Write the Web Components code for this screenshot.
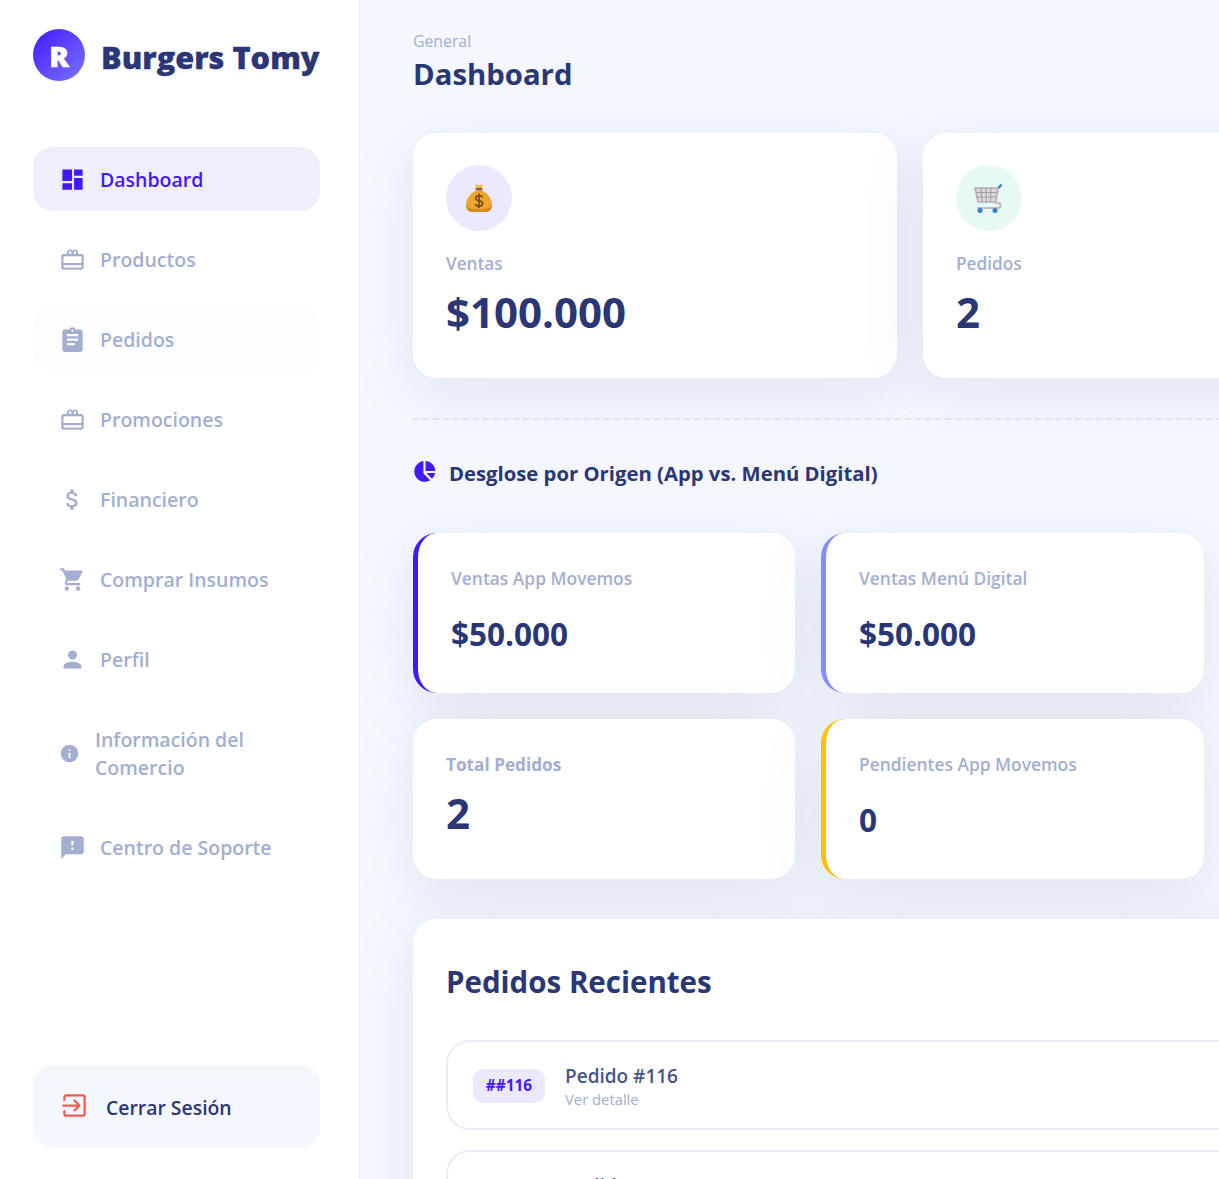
<!DOCTYPE html>
<html lang="es">
<head>
<meta charset="utf-8">
<title>Burgers Tomy</title>
<style>
  html, body { margin: 0; height: 100%; overflow: hidden; }
  body { font-family: 'Open Sans', 'Noto Sans', sans-serif; background: #f4f7fe; }
</style>
</head>
<body>
<app-shell>
  <side-nav slot="nav" brand="Burgers Tomy">
    <nav-item active icon="dashboard">Dashboard</nav-item>
    <nav-item icon="gift">Productos</nav-item>
    <nav-item hover icon="clipboard">Pedidos</nav-item>
    <nav-item icon="gift">Promociones</nav-item>
    <nav-item icon="dollar">Financiero</nav-item>
    <nav-item icon="cart">Comprar Insumos</nav-item>
    <nav-item icon="person">Perfil</nav-item>
    <nav-item narrow icon="info">Información del Comercio</nav-item>
    <nav-item icon="feedback">Centro de Soporte</nav-item>
  </side-nav>

  <page-head eyebrow="General" title="Dashboard"></page-head>

  <div style="display:flex;gap:26px">
    <stat-card label="Ventas" value="$100.000" tint="#ece8fd" icon="bag"></stat-card>
    <stat-card label="Pedidos" value="2" tint="#e6f9f4" icon="trolley"></stat-card>
  </div>

  <section-title>Desglose por Origen (App vs. Menú Digital)</section-title>

  <div style="display:grid;grid-template-columns:382px 383px;gap:26px;width:791px">
    <mini-card label="Ventas App Movemos" value="$50.000" accent="#4318ff"></mini-card>
    <mini-card label="Ventas Menú Digital" value="$50.000" accent="#868cff"></mini-card>
    <mini-card label="Total Pedidos" value="2" big></mini-card>
    <mini-card label="Pendientes App Movemos" value="0" accent="#ffc107"></mini-card>
  </div>

  <recent-panel heading="Pedidos Recientes">
    <order-row code="##116" name="Pedido #116" note="Ver detalle"></order-row>
    <order-row code="##115" name="Pedido #115" note="Ver detalle"></order-row>
  </recent-panel>
</app-shell>

<script>
// icon set, all on a 24 box
const ICONS = {
  dashboard: '<path d="M3 3h8.600v10.400H3zM3 15.400h8.600V21H3zM13.400 3H21v5.600h-7.600zM13.400 10.600H21V21h-7.600z"/>',
  gift: '<path fill-rule="evenodd" d="M4 7h3.300a3 3 0 0 1-.3-1.200C7 4.200 8.200 3 9.700 3c1 0 1.800.5 2.300 1.300C12.500 3.500 13.300 3 14.300 3 15.800 3 17 4.200 17 5.800c0 .4-.1.8-.3 1.200H20c1.200 0 2 .9 2 2v10c0 1.100-.8 2-2 2H4c-1.200 0-2-.9-2-2V9c0-1.100.8-2 2-2zm5.700-2.300c-.6 0-1 .5-1 1.100S9.100 7 9.700 7h1.300V5.800c0-.6-.6-1.100-1.300-1.100zm4.600 0c-.7 0-1.300.5-1.300 1.100V7h1.300c.6 0 1-.6 1-1.200s-.4-1.100-1-1.100zM4 9v6.200h16V9zm0 8.200V19h16v-1.800z"/>',
  clipboard: '<path fill-rule="evenodd" d="M19 3h-4.200C14.400 1.800 13.300 1 12 1s-2.400.8-2.800 2H5c-1.100 0-2 .9-2 2v16c0 1.100.9 2 2 2h14c1.100 0 2-.9 2-2V5c0-1.100-.9-2-2-2zm-7 0c.6 0 1 .4 1 1s-.4 1-1 1-1-.4-1-1 .4-1 1-1zM7 7h10v2H7zm0 4h10v2H7zm0 4h7v2H7z"/>',
  dollar: '<path d="M11.800 10.900c-2.300-.6-3-1.200-3-2.100 0-1.100 1-1.900 2.700-1.900 1.800 0 2.400.8 2.500 2.100h2.200c-.1-1.700-1.100-3.200-3.200-3.700V3h-3v2.200C8.100 5.600 6.500 6.900 6.500 8.800c0 2.300 1.900 3.400 4.700 4.100 2.500.6 3 1.500 3 2.400 0 .7-.5 1.800-2.700 1.800-2.100 0-2.900-.9-3-2.100H6.300c.1 2.200 1.800 3.500 3.700 3.900V21h3v-2.200c1.900-.4 3.500-1.500 3.500-3.500 0-2.800-2.400-3.800-4.700-4.400z"/>',
  cart: '<path d="M7 18c-1.100 0-2 .9-2 2s.9 2 2 2 2-.9 2-2-.9-2-2-2zM1 2v2h2l3.600 7.600-1.400 2.400c-.7 1.300.3 3 1.800 3h12v-2H7.400c-.1 0-.2-.1-.2-.2v-.1l.9-1.700h7.400c.8 0 1.400-.4 1.800-1l3.600-6.500c.3-.7-.2-1.500-.9-1.500H5.200l-.9-2zm16 16c-1.100 0-2 .9-2 2s.9 2 2 2 2-.9 2-2-.9-2-2-2z"/>',
  person: '<path d="M12 12c2.200 0 4-1.800 4-4s-1.800-4-4-4-4 1.800-4 4 1.800 4 4 4zm0 2c-2.700 0-8 1.300-8 4v2h16v-2c0-2.700-5.300-4-8-4z"/>',
  info: '<path fill-rule="evenodd" d="M12 2a10 10 0 1 0 0 20 10 10 0 0 0 0-20zm1 15h-2v-6h2zm0-8h-2V7h2z"/>',
  feedback: '<path fill-rule="evenodd" d="M20 2H4c-1.100 0-2 .9-2 2v18l4-4h14c1.100 0 2-.9 2-2V4c0-1.100-.9-2-2-2zm-7 12h-2v-2h2zm0-4h-2V6h2z"/>',
  logout: '<path fill="none" stroke="currentColor" stroke-width="2" stroke-linecap="round" stroke-linejoin="round" d="M3 7V4.500A1.500 1.500 0 0 1 4.500 3h15A1.500 1.500 0 0 1 21 4.500v15a1.500 1.500 0 0 1-1.500 1.500h-15A1.500 1.500 0 0 1 3 19.500V17M2 12h14M12 7.500l4.500 4.500-4.500 4.500"/>',
  pie: '<path d="M11 2A10 10 0 1 0 17.500 20.400L11 14zM13 2v9.500h9.500A10 10 0 0 0 13 2zM13.800 13.500h8.500A10 10 0 0 1 19.200 19z"/>'
};

function iconSvg(name) {
  return `<svg viewBox="0 0 24 24" fill="currentColor" aria-hidden="true">${ICONS[name] || ''}</svg>`;
}

const CARD_SHADOW = '0 16px 60px rgba(112, 144, 176, 0.16)';

const shellTemplate = document.createElement('template');
shellTemplate.innerHTML = `
  <style>
    :host {
      display: flex;
      width: 1219px;
      height: 1179px;
      overflow: hidden;
      background: #f4f7fe;
    }
    main {
      flex: 1;
      min-width: 0;
      padding: 30px 0 0 53px;
      display: flex;
      flex-direction: column;
      align-items: flex-start;
    }
    ::slotted(*) { flex: none; }
    slot[name="nav"]::slotted(*) { position: relative; z-index: 1; }
  </style>
  <slot name="nav"></slot>
  <main><slot></slot></main>
`;

class AppShell extends HTMLElement {
  constructor() {
    super();
    this.attachShadow({ mode: 'open' });
    this.shadowRoot.appendChild(shellTemplate.content.cloneNode(true));
  }
}

const navTemplate = document.createElement('template');
navTemplate.innerHTML = `
  <style>
    :host {
      display: flex;
      flex-direction: column;
      flex: none;
      box-sizing: border-box;
      width: 360px;
      height: 1179px;
      padding: 29px 39px 31px 33px;
      background: #fff;
      border-right: 1px solid #e7ebf6;
    }
    .brand {
      display: flex;
      align-items: center;
      gap: 16px;
      height: 52px;
      margin-bottom: 66px;
    }
    .logo {
      width: 52px;
      height: 52px;
      border-radius: 50%;
      background: linear-gradient(135deg, #4318ff, #7a74ff);
      color: #fff;
      font: 800 29px/54px 'Open Sans', sans-serif;
      -webkit-text-stroke: 0.6px #fff;
      text-align: center;
      flex: none;
    }
    .name {
      font: 800 30.7px/36px 'Open Sans', sans-serif;
      -webkit-text-stroke: 0.3px #2b3674;
      color: #2b3674;
      white-space: nowrap;
      padding-top: 3px;
    }
    nav {
      flex: 1;
      display: flex;
      flex-direction: column;
      gap: 16px;
    }
    .logout {
      display: flex;
      align-items: center;
      gap: 18px;
      height: 83px;
      box-sizing: border-box;
      padding: 0 28px;
      border-radius: 20px;
      background: #f4f7fe;
      color: #2b3674;
      font: 600 19.4px/28px 'Open Sans', sans-serif;
    }
    .logout svg { width: 27px; height: 27px; color: #ee5d50; flex: none; margin-top: -3px; }
    .logout span { padding-top: 2px; }
  </style>
  <div class="brand"><div class="logo">R</div><div class="name"></div></div>
  <nav><slot></slot></nav>
  <div class="logout">${iconSvg('logout')}<span>Cerrar Sesión</span></div>
`;

class SideNav extends HTMLElement {
  constructor() {
    super();
    this.attachShadow({ mode: 'open' });
    this.shadowRoot.appendChild(navTemplate.content.cloneNode(true));
  }
  connectedCallback() {
    this.shadowRoot.querySelector('.name').textContent = this.getAttribute('brand');
  }
}

const navItemTemplate = document.createElement('template');
navItemTemplate.innerHTML = `
  <style>
    :host {
      display: flex;
      align-items: center;
      gap: 15px;
      box-sizing: border-box;
      min-height: 64px;
      padding: 0 26px;
      border-radius: 20px;
      color: #a3aed0;
      font-size: 19.5px;
      font-weight: 600;
      line-height: 28px;
    }
    :host([active]) { background: #f0edfd; color: #4318ff; }
    :host([hover]) { background: #fdfdff; }
    :host([narrow]) { min-height: 92px; gap: 16px; }
    .icon { width: 27px; height: 27px; flex: none; }
    :host([narrow]) .icon { width: 21px; height: 21px; }
    .text { padding-top: 2px; margin-left: -1px; }
    svg { display: block; width: 100%; height: 100%; }
  </style>
  <span class="icon"></span>
  <span class="text"><slot></slot></span>
`;

class NavItem extends HTMLElement {
  constructor() {
    super();
    this.attachShadow({ mode: 'open' });
    this.shadowRoot.appendChild(navItemTemplate.content.cloneNode(true));
  }
  connectedCallback() {
    this.shadowRoot.querySelector('.icon').innerHTML = iconSvg(this.getAttribute('icon'));
  }
}

const headTemplate = document.createElement('template');
headTemplate.innerHTML = `
  <style>
    :host { display: block; height: 103px; }
    .eyebrow { font-size: 15.8px; line-height: 22px; color: #a3aed0; }
    .title { font-size: 29.3px; font-weight: 700; line-height: 44px; color: #2b3674; }
  </style>
  <div class="eyebrow"></div>
  <div class="title"></div>
`;

class PageHead extends HTMLElement {
  constructor() {
    super();
    this.attachShadow({ mode: 'open' });
    this.shadowRoot.appendChild(headTemplate.content.cloneNode(true));
  }
  connectedCallback() {
    this.shadowRoot.querySelector('.eyebrow').textContent = this.getAttribute('eyebrow');
    this.shadowRoot.querySelector('.title').textContent = this.getAttribute('title');
  }
}

const statTemplate = document.createElement('template');
statTemplate.innerHTML = `
  <style>
    :host {
      display: block;
      box-sizing: border-box;
      width: 484px;
      height: 245px;
      flex: none;
      padding: 32px 33px;
      background: #fff;
      border-radius: 24px;
      box-shadow: ${CARD_SHADOW};
    }
    .badge {
      width: 66px;
      height: 66px;
      border-radius: 50%;
      display: flex;
      align-items: center;
      justify-content: center;
      margin-bottom: 20px;
    }
    .badge svg { display: block; }
    .label { font-size: 17.2px; font-weight: 600; line-height: 26px; color: #a3aed0; margin-bottom: 6px; }
    .value { font-size: 42px; font-weight: 700; line-height: 58px; color: #2b3674; }
  </style>
  <div class="badge"></div>
  <div class="label"></div>
  <div class="value"></div>
`;

const BAG = `<svg width="30" height="32" viewBox="0 0 30 32">
  <path d="M11 2l4 1.500L19 2l-1.500 5h-5z" fill="#f5b83a"/>
  <rect x="11.500" y="6" width="7" height="2.500" rx="1" fill="#8a5a2b"/>
  <path d="M12 8.500C5 12 2 18 2 23c0 5 3 7 6 7h14c3 0 6-2 6-7 0-5-3-11-10-14.500z" fill="#eda62f"/>
  <path d="M2.200 23c0 5 2.800 7 5.800 7h14c3 0 5.800-2 5.800-7-2 3-6 4-12.800 4S4.200 26 2.200 23z" fill="#d98a1f"/>
  <path d="M18.600 15.500c-.5-1.300-1.800-1.900-3.600-1.900s-3.300.9-3.300 2.600c0 3.500 7 1.800 7 5.300 0 1.700-1.600 2.600-3.700 2.600s-3.300-.8-3.700-2.200M15 11.500v14.600" fill="none" stroke="#7a4a24" stroke-width="1.700"/>
</svg>`;

const TROLLEY = `<svg width="34" height="32" viewBox="0 0 34 32" fill="none">
  <path d="M3 6h23l-2.500 14H6z" fill="#dcd8de" stroke="#b4adb8" stroke-width="1.500"/>
  <path d="M4 10.500h21M4.700 15h19.500M9 6l1 14M14 6l.4 14M19 6l-.4 14" stroke="#a39ba8" stroke-width="1"/>
  <path d="M26 7.500l-2.500 13c4 0 5 1.500 5 3s-1.500 2.500-3 2.500H5" stroke="#c0b8c2" stroke-width="2"/>
  <path d="M26.500 6l3-3.500" stroke="#4a80c8" stroke-width="2.500"/>
  <circle cx="8" cy="28.500" r="2.500" fill="#3b7bd0"/>
  <circle cx="23" cy="28.500" r="2.500" fill="#3b7bd0"/>
</svg>`;

class StatCard extends HTMLElement {
  constructor() {
    super();
    this.attachShadow({ mode: 'open' });
    this.shadowRoot.appendChild(statTemplate.content.cloneNode(true));
  }
  connectedCallback() {
    const root = this.shadowRoot;
    const badge = root.querySelector('.badge');
    badge.style.background = this.getAttribute('tint');
    badge.innerHTML = this.getAttribute('icon') === 'bag' ? BAG : TROLLEY;
    root.querySelector('.label').textContent = this.getAttribute('label');
    root.querySelector('.value').textContent = this.getAttribute('value');
  }
}

const sectionTemplate = document.createElement('template');
sectionTemplate.innerHTML = `
  <style>
    :host {
      display: flex;
      align-items: flex-start;
      gap: 12px;
      box-sizing: border-box;
      width: 1100px;
      margin-top: 40px;
      padding-top: 39px;
      height: 115px;
      border-top: 2px dashed #dfe4f0;
      color: #2b3674;
      font-size: 20.3px;
      font-weight: 700;
      line-height: 28px;
    }
    svg { width: 25px; height: 25px; color: #4318ff; flex: none; margin-left: -1px; }
  </style>
  ${iconSvg('pie')}<span><slot></slot></span>
`;

class SectionTitle extends HTMLElement {
  constructor() {
    super();
    this.attachShadow({ mode: 'open' });
    this.shadowRoot.appendChild(sectionTemplate.content.cloneNode(true));
  }
}

const miniTemplate = document.createElement('template');
miniTemplate.innerHTML = `
  <style>
    :host {
      display: block;
      box-sizing: border-box;
      height: 160px;
      padding: 32px 33px;
      background: #fff;
      border-radius: 24px;
      box-shadow: ${CARD_SHADOW};
    }
    .label { font-size: 17.4px; font-weight: 600; line-height: 26px; color: #a3aed0; margin-bottom: 22px; }
    .value { font-size: 31.500px; font-weight: 700; line-height: 42px; color: #2b3674; }
    :host([big]) .label { font-size: 17.2px; font-weight: 700; line-height: 28px; margin-bottom: 5px; }
    :host([big]) .value { font-size: 42px; line-height: 58px; }
  </style>
  <div class="label"></div>
  <div class="value"></div>
`;

class MiniCard extends HTMLElement {
  constructor() {
    super();
    this.attachShadow({ mode: 'open' });
    this.shadowRoot.appendChild(miniTemplate.content.cloneNode(true));
  }
  connectedCallback() {
    const accent = this.getAttribute('accent');
    if (accent) this.style.borderLeft = `5px solid ${accent}`;
    this.shadowRoot.querySelector('.label').textContent = this.getAttribute('label');
    this.shadowRoot.querySelector('.value').textContent = this.getAttribute('value');
  }
}

const panelTemplate = document.createElement('template');
panelTemplate.innerHTML = `
  <style>
    :host {
      display: block;
      box-sizing: border-box;
      width: 1100px;
      margin-top: 40px;
      padding: 41px 33px;
      background: #fff;
      border-radius: 24px 24px 0 0;
      box-shadow: ${CARD_SHADOW};
    }
    h2 { margin: 0 0 36px; font-size: 29.500px; font-weight: 700; line-height: 44px; color: #2b3674; }
    .list { display: flex; flex-direction: column; gap: 20px; }
  </style>
  <h2></h2>
  <div class="list"><slot></slot></div>
`;

class RecentPanel extends HTMLElement {
  constructor() {
    super();
    this.attachShadow({ mode: 'open' });
    this.shadowRoot.appendChild(panelTemplate.content.cloneNode(true));
  }
  connectedCallback() {
    this.shadowRoot.querySelector('h2').textContent = this.getAttribute('heading');
  }
}

const rowTemplate = document.createElement('template');
rowTemplate.innerHTML = `
  <style>
    :host {
      display: flex;
      align-items: center;
      gap: 20px;
      box-sizing: border-box;
      height: 90px;
      padding: 2px 25px 0;
      border: 2px solid #e9edf7;
      border-radius: 24px;
    }
    .code {
      box-sizing: border-box;
      width: 72px;
      height: 34px;
      border-radius: 10px;
      background: #ece8fd;
      color: #4318ff;
      font-size: 15.400px;
      font-weight: 700;
      line-height: 34px;
      text-align: center;
    }
    .name { font-size: 19px; font-weight: 600; line-height: 26px; color: #47548c; }
    .note { font-size: 14.800px; line-height: 20px; color: #a3aed0; }
  </style>
  <div class="code"></div>
  <div><div class="name"></div><div class="note"></div></div>
`;

class OrderRow extends HTMLElement {
  constructor() {
    super();
    this.attachShadow({ mode: 'open' });
    this.shadowRoot.appendChild(rowTemplate.content.cloneNode(true));
  }
  connectedCallback() {
    this.shadowRoot.querySelector('.code').textContent = this.getAttribute('code');
    this.shadowRoot.querySelector('.name').textContent = this.getAttribute('name');
    this.shadowRoot.querySelector('.note').textContent = this.getAttribute('note');
  }
}

customElements.define('app-shell', AppShell);
customElements.define('side-nav', SideNav);
customElements.define('nav-item', NavItem);
customElements.define('page-head', PageHead);
customElements.define('stat-card', StatCard);
customElements.define('section-title', SectionTitle);
customElements.define('mini-card', MiniCard);
customElements.define('recent-panel', RecentPanel);
customElements.define('order-row', OrderRow);
</script>
</body>
</html>
